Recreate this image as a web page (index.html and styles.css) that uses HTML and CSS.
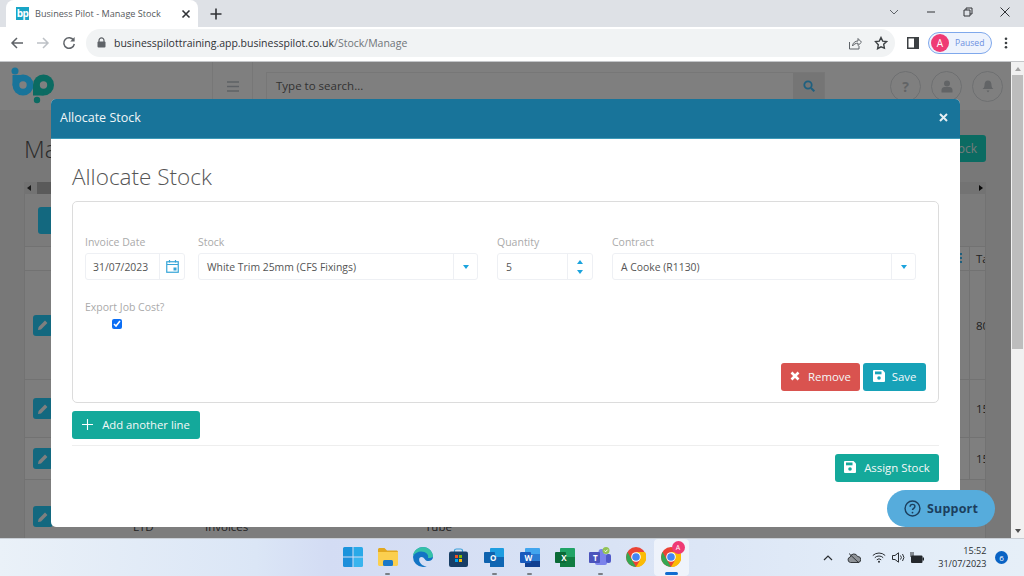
FILE: index.html
```html
<!DOCTYPE html>
<html lang="en">
<head>
<meta charset="utf-8">
<title>Business Pilot - Manage Stock</title>
<link rel="stylesheet" href="styles.css">
</head>
<body>
<div class="screen">
  <div class="tabstrip">
    <div class="tab">
      <span class="favicon">bp</span>
      <span class="tab-title">Business Pilot - Manage Stock</span>
      <svg class="tab-close" width="10" height="10" viewBox="0 0 10 10"><path d="M1.5 1.5l7 7M8.5 1.5l-7 7" stroke="#303236" stroke-width="1.6"/></svg>
    </div>
    <svg class="new-tab" width="12" height="12" viewBox="0 0 12 12"><path d="M6 .5v11M.5 6h11" stroke="#303236" stroke-width="1.6"/></svg>
    <div class="win-controls">
      <svg width="12" height="12" viewBox="0 0 12 12"><path d="M2 4l4 4 4-4" fill="none" stroke="#5f6368"/></svg>
      <svg class="wc-gap" width="12" height="12" viewBox="0 0 12 12"><path d="M2 6h8" stroke="#303236"/></svg>
      <svg class="wc-gap" width="12" height="12" viewBox="0 0 12 12"><path d="M2 4h6v6H2zM4 4V2h6v6H8" fill="none" stroke="#303236"/></svg>
      <svg class="wc-gap" width="12" height="12" viewBox="0 0 12 12"><path d="M1.5 1.5l9 9M10.5 1.5l-9 9" stroke="#303236"/></svg>
    </div>
  </div>
  <div class="toolbar">
    <svg class="nav" width="14" height="14" viewBox="0 0 14 14"><path d="M13 7H2M7 2L2 7l5 5" fill="none" stroke="#5f6368" stroke-width="1.5"/></svg>
    <svg class="nav" width="14" height="14" viewBox="0 0 14 14"><path d="M1 7h11M7 2l5 5-5 5" fill="none" stroke="#bdc1c6" stroke-width="1.5"/></svg>
    <svg class="nav" width="14" height="14" viewBox="0 0 14 14"><path d="M11.6 4.2A5.3 5.3 0 1 0 12.3 8" fill="none" stroke="#5f6368" stroke-width="1.5"/><path d="M12.6 1v4.4H8.2z" fill="#5f6368"/></svg>
    <div class="omnibox">
      <svg class="lock" width="9" height="11" viewBox="0 0 9 11"><path d="M2 5V3.400a2.500 2.500 0 0 1 5 0V5" fill="none" stroke="#5f6368" stroke-width="1.200"/><rect x=".5" y="4.500" width="8" height="6" rx="1" fill="#5f6368"/></svg>
      <span class="url">businesspilottraining.app.businesspilot.co.uk<span class="url-path">/Stock/Manage</span></span>
      <svg width="14" height="14" viewBox="0 0 14 14"><path d="M1.500 6v7h9.500V10" fill="none" stroke="#5f6368"/><path d="M4.500 10c.3-3.500 3-5 5.500-5V2.500l3.500 3.700L10 9.500V7.200c-2.200 0-4 .8-5.500 2.800z" fill="none" stroke="#5f6368"/></svg>
      <svg class="omni-star" width="14" height="14" viewBox="0 0 14 14"><path d="M7 1.500l1.700 3.600 3.800.5-2.800 2.700.7 3.900L7 10.800 3.600 12.700l.7-3.900L1.500 5.600l3.800-.5z" fill="none" stroke="#3c4043" stroke-width="1.400"/></svg>
    </div>
    <svg class="side" width="12" height="12" viewBox="0 0 12 12"><rect x=".75" y=".75" width="10.500" height="10.500" fill="none" stroke="#3c4043" stroke-width="1.500"/><rect x="7" y="1" width="4" height="10" fill="#3c4043"/></svg>
    <div class="profile"><span class="avatar">A</span><span class="paused">Paused</span></div>
    <svg class="kebab" width="4" height="12" viewBox="0 0 4 12"><circle cx="2" cy="1.800" r="1.300" fill="#3c4043"/><circle cx="2" cy="6" r="1.300" fill="#3c4043"/><circle cx="2" cy="10.200" r="1.300" fill="#3c4043"/></svg>
  </div>

  <div class="viewport">
    <div class="page">
      <header class="app-head">
        <svg class="logo" width="46" height="40" viewBox="0 0 46 40">
          <circle cx="5" cy="5" r="3.500" fill="#18749a"/>
          <circle cx="13" cy="19" r="10.500" fill="#18749a"/>
          <rect x="2.500" y="9" width="10.500" height="10.500" fill="#18749a"/>
          <circle cx="13" cy="19" r="3.700" fill="#808080"/>
          <circle cx="33.500" cy="19" r="10.500" fill="#0b6b62"/>
          <rect x="23" y="19" width="10.500" height="10.500" fill="#0b6b62"/>
          <circle cx="33.500" cy="19" r="3.700" fill="#808080"/>
          <circle cx="27" cy="34" r="3.200" fill="#0b6b62"/>
        </svg>
        <div class="burger-cell"><svg width="12" height="11" viewBox="0 0 12 11"><path d="M0 1h12M0 5.500h12M0 10h12" stroke="#bcc3ca" stroke-width="1.500"/></svg></div>
        <div class="search"><span class="search-text">Type to search...</span><span class="search-btn"><svg width="12" height="12" viewBox="0 0 12 12"><circle cx="5" cy="5" r="3.700" fill="none" stroke="#3ec0ff" stroke-width="1.800"/><path d="M8 8l3.300 3.300" stroke="#3ec0ff" stroke-width="2"/></svg></span></div>
        <div class="head-icons">
          <span class="round"><span class="qm">?</span></span>
          <span class="round"><svg width="12" height="13" viewBox="0 0 12 13"><circle cx="6" cy="3.500" r="3" fill="#c4c8cc"/><path d="M.5 12.500V10c0-1.700 1.500-3 3-3h5c1.500 0 3 1.300 3 3v2.500z" fill="#c4c8cc"/></svg></span>
          <span class="round"><svg width="12" height="13" viewBox="0 0 12 13"><path d="M6 .5c2.500 0 3.500 2 3.500 4.500 0 2 .8 3 2 4H.5c1.200-1 2-2 2-4C2.500 2.500 3.500.5 6 .5zM4.500 10.500h3L6 12.500z" fill="#c4c8cc"/></svg></span>
        </div>
      </header>
      <main class="main">
        <div class="title-row"><h1 class="page-title">Manage Stock</h1><button class="add-stock">Add Stock</button></div>
        <div class="hscroll"><span class="arrow-l"></span><span class="thumb"></span><span class="arrow-r"></span></div>
        <div class="table">
          <div class="tools"><span class="tool-btn"></span></div>
          <div class="row row-head"><span class="col-menu"></span><span class="col-end">Ta</span></div>
          <div class="row row-a"><span class="edit"><svg width="12" height="12" viewBox="0 0 12 12"><path d="M1 11l.6-3L8 1.600 10.400 4 4 10.400z" fill="#fff"/></svg></span><span class="col-end col-push">80</span></div>
          <div class="row row-b"><span class="edit"><svg width="12" height="12" viewBox="0 0 12 12"><path d="M1 11l.6-3L8 1.600 10.400 4 4 10.400z" fill="#fff"/></svg></span><span class="col-end col-push">15</span></div>
          <div class="row row-c"><span class="edit"><svg width="12" height="12" viewBox="0 0 12 12"><path d="M1 11l.6-3L8 1.600 10.400 4 4 10.400z" fill="#fff"/></svg></span><span class="col-end col-push">15</span></div>
          <div class="row row-d">
            <span class="edit"><svg width="12" height="12" viewBox="0 0 12 12"><path d="M1 11l.6-3L8 1.600 10.400 4 4 10.400z" fill="#fff"/></svg></span>
            <span class="mini mini-blue"></span><span class="mini mini-red"></span>
            <span class="cell-a">LTD</span><span class="cell-b">Invoices</span><span class="cell-c">Tube</span>
          </div>
        </div>
      </main>
      <div class="overlay">
        <div class="modal">
          <div class="modal-head"><span class="modal-title">Allocate Stock</span><svg width="9" height="9" viewBox="0 0 9 9"><path d="M1 1l7 7M8 1L1 8" stroke="#e6eef2" stroke-width="2"/></svg></div>
          <div class="modal-body">
            <h2 class="heading">Allocate Stock</h2>
            <div class="line-box">
              <div class="fields">
                <div class="field f-date">
                  <label class="label">Invoice Date</label>
                  <div class="control"><span class="value">31/07/2023</span><span class="addon addon-date"><svg width="13" height="13" viewBox="0 0 13 13"><rect x=".75" y="1.750" width="11.500" height="10.500" fill="none" stroke="#36a5d8" stroke-width="1.200"/><path d="M1 4.500h11M3.500 0v2.500M9.500 0v2.500" stroke="#36a5d8" stroke-width="1.200"/><rect x="7.500" y="7.500" width="3" height="3" fill="#36a5d8"/></svg></span></div>
                </div>
                <div class="field f-stock">
                  <label class="label">Stock</label>
                  <div class="control"><span class="value">White Trim 25mm (CFS Fixings)</span><span class="addon addon-select"><i class="caret"></i></span></div>
                </div>
                <div class="field f-qty">
                  <label class="label">Quantity</label>
                  <div class="control"><span class="value">5</span><span class="addon addon-spin"><i class="caret-up"></i><i class="caret"></i></span></div>
                </div>
                <div class="field f-contract">
                  <label class="label">Contract</label>
                  <div class="control"><span class="value">A Cooke (R1130)</span><span class="addon addon-select"><i class="caret"></i></span></div>
                </div>
              </div>
              <div class="export">
                <label class="label">Export Job Cost?</label>
                <input class="check" type="checkbox" checked>
              </div>
              <div class="line-actions">
                <button class="btn btn-red"><svg width="10" height="10" viewBox="0 0 10 10"><path d="M1.500 1.500l7 7M8.500 1.500l-7 7" stroke="#fff" stroke-width="2.600"/></svg>Remove</button>
                <button class="btn btn-cyan"><svg class="disk" width="12" height="12" viewBox="0 0 12 12"><path d="M1 0h8.500L12 2.500V11a1 1 0 0 1-1 1H1a1 1 0 0 1-1-1V1a1 1 0 0 1 1-1z" fill="#fff"/><rect x="2" y="1.500" width="6.500" height="2.800" fill="#17a2b8"/><circle cx="6" cy="8" r="1.800" fill="#17a2b8"/></svg>Save</button>
              </div>
            </div>
            <button class="btn btn-teal btn-add"><svg width="11" height="11" viewBox="0 0 11 11"><path d="M5.500 0v11M0 5.500h11" stroke="#fff" stroke-width="1.100"/></svg>Add another line</button>
            <div class="modal-rule"></div>
            <div class="modal-actions"><button class="btn btn-teal btn-assign"><svg class="disk" width="12" height="12" viewBox="0 0 12 12"><path d="M1 0h8.500L12 2.500V11a1 1 0 0 1-1 1H1a1 1 0 0 1-1-1V1a1 1 0 0 1 1-1z" fill="#fff"/><rect x="2" y="1.500" width="6.500" height="2.800" fill="#14a99b"/><circle cx="6" cy="8" r="1.800" fill="#14a99b"/></svg>Assign Stock</button></div>
          </div>
        </div>
      </div>
      <div class="support"><svg width="17" height="17" viewBox="0 0 19 19"><circle cx="9.500" cy="9.500" r="8.300" fill="none" stroke="#1c3f5e" stroke-width="1.600"/><path d="M6.800 7.500c0-1.700 1.200-2.600 2.700-2.600s2.700.9 2.700 2.400c0 2-2.700 2-2.700 4" fill="none" stroke="#1c3f5e" stroke-width="1.600"/><circle cx="9.500" cy="14" r="1" fill="#1c3f5e"/></svg><span>Support</span></div>
    </div>
    <div class="vscroll"><span class="v-up"></span><span class="v-thumb"></span><span class="v-down"></span></div>
  </div>

  <footer class="taskbar">
    <div class="task-icons">
      <span class="ti"><svg width="20" height="20" viewBox="0 0 20 20"><path d="M0 1.500A1.500 1.500 0 0 1 1.500 0h8v9.500H0z" fill="#1b93dc"/><path d="M10.500 0h8A1.500 1.500 0 0 1 20 1.500v8h-9.500z" fill="#29a9e8"/><path d="M0 10.500h9.500V20h-8A1.500 1.500 0 0 1 0 18.500z" fill="#1d8fdb"/><path d="M10.500 10.500H20v8a1.500 1.500 0 0 1-1.500 1.500h-8z" fill="#39b4ee"/></svg></span>
      <span class="ti"><svg width="20" height="18" viewBox="0 0 20 18"><path d="M0 1.500C0 .7.700 0 1.500 0h5L9 2.500h9.500c.8 0 1.500.7 1.500 1.500v1H0z" fill="#e2a820"/><path d="M0 4h20v12.500c0 .8-.7 1.500-1.500 1.500h-17C.7 18 0 17.300 0 16.500z" fill="#fbcf4f"/><rect x="5" y="12" width="10" height="6" rx="1.500" fill="#1a78c9"/></svg><i class="dot"></i></span>
      <span class="ti"><svg width="20" height="20" viewBox="0 0 20 20"><path d="M10 0a10 10 0 0 1 10 10c0 3-3 4.500-5.500 4-3-.5-3-4-6-4C6 10 5.500 13 7 15.500c1.200 2 3.500 3.800 6.800 3.800A10 10 0 0 1 10 20 10 10 0 0 1 10 0z" fill="#1274c4"/><path d="M10 0c-5 0-9.500 3.500-10 9 2-3 5-4.500 8-4.500 5 0 8 3 7 6.500 3 0 5-.5 5-2C19.500 4 15.500 0 10 0z" fill="#35c1a8"/></svg></span>
      <span class="ti"><svg width="19" height="19" viewBox="0 0 19 19"><path d="M5.500 4V2.500C5.500 1.500 6.500 1 7.500 1h4c1 0 2 .5 2 1.500V4" fill="none" stroke="#3aa0d8" stroke-width="1.200"/><rect y="3.500" width="19" height="15.500" rx="2" fill="#183e66"/><rect x="6" y="7" width="3" height="3" fill="#f25022"/><rect x="10" y="7" width="3" height="3" fill="#7fba00"/><rect x="6" y="11" width="3" height="3" fill="#00a4ef"/><rect x="10" y="11" width="3" height="3" fill="#ffb900"/></svg></span>
      <span class="ti"><svg width="20" height="19" viewBox="0 0 20 19"><rect x="6" y="0" width="14" height="17" rx="1" fill="#1e9de0"/><rect x="6" y="9" width="14" height="10" fill="#0f66b3"/><rect y="4" width="11" height="11" rx="1" fill="#0f62ae"/></svg><span class="ti-letter">O</span><i class="dot"></i></span>
      <span class="ti"><svg width="20" height="19" viewBox="0 0 20 19"><rect x="5" y="0" width="15" height="19" rx="1" fill="#41a5ee"/><rect x="5" y="6" width="15" height="7" fill="#2b7cd3"/><rect x="5" y="13" width="15" height="6" fill="#103f91"/><rect y="4" width="11" height="11" rx="1" fill="#185abd"/></svg><span class="ti-letter">W</span><i class="dot"></i></span>
      <span class="ti"><svg width="20" height="19" viewBox="0 0 20 19"><rect x="5" y="0" width="15" height="19" rx="1" fill="#21a366"/><rect x="5" y="9" width="15" height="10" fill="#107c41"/><rect y="4" width="11" height="11" rx="1" fill="#0b6a37"/></svg><span class="ti-letter">X</span></span>
      <span class="ti"><svg width="22" height="20" viewBox="0 0 22 20"><circle cx="12.500" cy="5" r="3" fill="#7b83eb"/><rect x="6" y="7" width="12" height="11" rx="2" fill="#7b83eb"/><rect x="17" y="7" width="5" height="9" rx="2" fill="#5059c9"/><rect y="5" width="11" height="11" rx="1" fill="#4b53bc"/><circle cx="17" cy="3.500" r="3.500" fill="#92c353"/><path d="M15.300 3.500l1.300 1.300 2-2.200" fill="none" stroke="#fff"/></svg><span class="ti-letter ti-t">T</span><i class="dot"></i></span>
      <span class="ti"><svg width="20" height="20" viewBox="0 0 20 20"><circle cx="10" cy="10" r="10" fill="#ea4335"/><path d="M1.500 5L6 13l4 7a10 10 0 0 1-8.500-15z" fill="#34a853"/><path d="M10 5h9a10 10 0 0 1-9 15l4.300-7.500z" fill="#fbbc05"/><circle cx="10" cy="10" r="4.800" fill="#fff"/><circle cx="10" cy="10" r="3.800" fill="#4285f4"/></svg></span>
      <span class="ti ti-active"><svg width="20" height="20" viewBox="0 0 20 20"><circle cx="10" cy="10" r="10" fill="#ea4335"/><path d="M1.500 5L6 13l4 7a10 10 0 0 1-8.500-15z" fill="#34a853"/><path d="M10 5h9a10 10 0 0 1-9 15l4.300-7.500z" fill="#fbbc05"/><circle cx="10" cy="10" r="4.800" fill="#fff"/><circle cx="10" cy="10" r="3.800" fill="#4285f4"/></svg><span class="ti-badge">A</span><i class="bar"></i></span>
    </div>
    <div class="tray">
      <svg width="10" height="6" viewBox="0 0 10 6"><path d="M1 5l4-4 4 4" fill="none" stroke="#2b2f33" stroke-width="1.200"/></svg>
      <svg class="tray-cloud" width="14" height="12" viewBox="0 0 14 12"><path d="M3.500 10.500a2.800 2.800 0 0 1-.3-5.500 3.800 3.800 0 0 1 7.300-.5 3 3 0 0 1 .5 6z" fill="#8f9398" stroke="#33373b"/><path d="M2 1.500l10 9.500" stroke="#33373b"/></svg>
      <svg width="14" height="11" viewBox="0 0 14 11"><path d="M.8 3.500a9 9 0 0 1 12.400 0M2.800 5.700a6 6 0 0 1 8.400 0M4.800 7.800a3.200 3.200 0 0 1 4.400 0" fill="none" stroke="#2b2f33"/><circle cx="7" cy="9.800" r="1" fill="#2b2f33"/></svg>
      <svg width="13" height="11" viewBox="0 0 13 11"><path d="M.5 3.500h2.500L6.500.8v9.400L3 7.500H.5z" fill="none" stroke="#2b2f33"/><path d="M8.500 3.500a3 3 0 0 1 0 4M10.500 2a5.500 5.500 0 0 1 0 7" fill="none" stroke="#2b2f33"/></svg>
      <svg width="14" height="12" viewBox="0 0 14 12"><rect x="1" y="3.500" width="11.500" height="7.500" rx="1" fill="#24282c"/><rect x="12.500" y="5.500" width="1.500" height="3" fill="#24282c"/><path d="M1 0v5M3 0v5" stroke="#24282c"/></svg>
      <div class="clock"><span>15:52</span><span>31/07/2023</span></div>
      <span class="notif">6</span>
    </div>
  </footer>
</div>
</body>
</html>
```

FILE: styles.css
```css
* { box-sizing: border-box; }
html, body { margin: 0; padding: 0; }
body { font-family: "Open Sans", "Noto Sans", sans-serif; }
.screen { width: 1024px; height: 576px; overflow: hidden; display: flex; flex-direction: column; background: #fff; }

/* Browser tabs */
.tabstrip { height: 27px; background: #dee1e6; display: flex; align-items: flex-start; flex: none; }
.tab { width: 192px; height: 27px; margin-left: 6px; background: #fff; border-radius: 8px 8px 0 0; display: flex; align-items: center; padding: 0 7px 0 10px; }
.favicon { width: 13px; height: 13px; background: #19a5c6; color: #fff; font: 700 10px/12px "Open Sans", sans-serif; text-align: center; letter-spacing: -.6px; flex: none; }
.tab-title { font-size: 9.150px; color: #55585c; margin-left: 6px; white-space: nowrap; flex: 1; }
.tab-close { flex: none; }
.new-tab { margin: 8px 0 0 12px; }
.win-controls { margin-left: auto; display: flex; padding: 6px 13px 0 0; }
.wc-gap { margin-left: 25px; }

/* Browser toolbar */
.toolbar { height: 35px; flex: none; background: #fff; border-bottom: 1px solid #c4c6c9; display: flex; align-items: center; padding: 0 0 3px 10px; }
.nav { margin-right: 12px; flex: none; }
.omnibox { width: 809px; height: 28px; margin-left: -2px; background: #f1f3f4; border-radius: 14px; display: flex; align-items: center; padding: 0 7px 0 11px; flex: none; }
.lock { flex: none; }
.url { font-size: 10.500px; color: #303236; margin-left: 8px; white-space: nowrap; flex: 1; }
.url-path { color: #70757a; }
.omni-star { margin-left: 12px; }
.side { margin-left: 12px; flex: none; }
.profile { width: 64px; height: 22px; margin-left: 9px; border: 1px solid #7fa8ec; border-radius: 11px; background: #eef3fd; display: flex; align-items: center; padding-left: 2px; flex: none; }
.avatar { width: 18px; height: 18px; border-radius: 50%; background: #ef3a74; color: #fff; font-size: 10px; line-height: 18px; text-align: center; }
.paused { font-size: 8.600px; color: #6c8fe0; margin-left: 6px; }
.kebab { margin-left: 12px; flex: none; }

/* Page */
.viewport { flex: 1; display: flex; min-height: 0; }
.page { width: 1011px; position: relative; overflow: hidden; background: #f0f0f0; flex: none; }
.app-head { height: 48px; background: #fff; display: flex; align-items: stretch; }
.logo { position: relative; z-index: 2; margin: 4px 0 0 10px; flex: none; }
.burger-cell { width: 41px; margin: 0 0 0 156px; border-left: 1px solid #efefef; border-right: 1px solid #efefef; display: flex; align-items: center; justify-content: center; flex: none; }
.search { width: 559px; height: 28px; margin: 10px 0 0 13px; border: 1px solid #eee; display: flex; align-items: center; flex: none; }
.search-text { flex: 1; padding: 0 0 2px 9px; font-size: 11.500px; color: #666; }
.search-btn { width: 31px; height: 26px; background: #eaeaea; display: flex; align-items: center; justify-content: center; }
.head-icons { display: flex; gap: 10px; margin: 9px 0 0 65px; height: 31px; }
.round { width: 31px; height: 31px; border: 1px solid #dcdfe2; border-radius: 50%; display: flex; align-items: center; justify-content: center; }
.qm { font-size: 14px; font-weight: 700; color: #c4c8cc; }

.main { padding: 25px 25px 0 24px; }
.title-row { height: 27px; display: flex; justify-content: space-between; align-items: center; }
.page-title { margin: 0; font-size: 24px; font-weight: 300; color: #555; }
.add-stock { height: 27px; width: 100px; border: 0; border-radius: 3px; background: #16d6c4; color: #e8f5f3; font: 12px "Open Sans", sans-serif; text-align: right; padding: 0 9px 0 0; }
.hscroll { height: 12px; margin-top: 20px; background: #e6e6e6; display: flex; align-items: center; padding: 0 3px; }
.arrow-l { border: 3px solid transparent; border-right: 4px solid #333; border-left: 0; }
.thumb { width: 14px; height: 12px; margin-left: 6px; background: #b5b5b5; }
.arrow-r { margin-left: auto; border: 3px solid transparent; border-left: 4px solid #111; border-right: 0; }
.table { border-left: 1px solid #e4e4e4; border-right: 1px solid #e4e4e4; background: #f7f7f7; }
.tools { height: 52px; padding: 13px 0 0 13px; }
.tool-btn { display: block; width: 40px; height: 27px; border-radius: 3px; background: #26d0ff; }
.row { display: flex; align-items: center; padding-left: 8px; border-top: 1px solid #e4e4e4; font-size: 11.500px; color: #444; }
.row-head { height: 24px; background: #fff; }
.row-a { height: 109px; background: #fafafa; }
.row-b { height: 58px; background: #fafafa; }
.row-c { height: 42px; background: #fff; }
.row-d { height: 74px; background: #fafafa; }
.col-menu { width: 3px; height: 12px; margin-left: auto; margin-right: 7px; background: repeating-linear-gradient(#3ec0ff 0 2px, transparent 2px 4px); }
.col-end { align-self: stretch; width: 16px; padding-left: 6px; border-left: 1px solid #e4e4e4; display: flex; align-items: center; overflow: hidden; white-space: nowrap; }
.col-push { margin-left: auto; }
.edit { width: 20px; height: 21px; border-radius: 3px; background: #26d0ff; display: flex; align-items: center; justify-content: center; flex: none; }
.mini { width: 22px; height: 21px; border-radius: 3px; flex: none; }
.mini-blue { margin-left: 8px; background: #26d0ff; }
.mini-red { margin-left: 9px; background: #ff6a64; }
.cell-a { margin-left: 19px; width: 72px; padding-top: 20px; }
.cell-b { width: 220px; padding-top: 20px; }
.cell-c { padding-top: 20px; }

/* Modal */
.overlay { position: absolute; inset: 0; background: rgba(0, 0, 0, .5); padding: 37px 51px 0; }
.modal { height: 428px; background: #fff; border-radius: 5px; overflow: hidden; }
.modal-head { height: 40px; background: #18749a; border-bottom: 1px solid #3d9ab8; display: flex; align-items: center; justify-content: space-between; padding: 0 12px 3px 9px; }
.modal-title { font-size: 12.500px; color: #f1f6f8; }
.modal-body { padding: 0 21px; }
.heading { margin: 0; height: 62px; padding-top: 21px; font-size: 22.500px; line-height: 34px; font-weight: 300; color: #555; }
.line-box { height: 202px; border: 1px solid #dcdcdc; border-radius: 5px; padding: 33px 12px 0; display: flex; flex-direction: column; }
.fields { display: flex; }
.field { flex: none; }
.f-date { width: 100px; }
.f-date .value { padding-left: 7px; }
.f-stock { width: 280px; margin-left: 13px; }
.f-qty { width: 96px; margin-left: 19px; }
.f-contract { width: 304px; margin-left: 19px; }
.label { display: block; font-size: 10.500px; line-height: 14px; color: #aaa; margin-bottom: 4px; }
.control { height: 27px; border: 1px solid #eef0f4; border-radius: 3px; display: flex; align-items: center; }
.value { flex: 1; padding-left: 8px; font-size: 10.400px; color: #555; white-space: nowrap; }
.addon { height: 100%; border-left: 1px solid #eef0f4; display: flex; align-items: center; justify-content: center; flex: none; }
.addon-date { width: 25px; }
.addon-select { width: 24px; }
.addon-spin { width: 25px; flex-direction: column; gap: 6px; }
.caret { width: 0; height: 0; border: 3.500px solid transparent; border-top: 4px solid #1ba3dd; border-bottom: 0; }
.caret-up { width: 0; height: 0; border: 3.500px solid transparent; border-bottom: 4px solid #1ba3dd; border-top: 0; }
.export { margin-top: 20px; }
.export .label { margin-bottom: 5px; }
.check { display: block; width: 10px; height: 10px; margin: 0 0 0 27px; accent-color: #0b6ef5; }
.line-actions { margin-top: auto; padding-bottom: 11px; display: flex; justify-content: flex-end; gap: 3px; }
.btn { height: 28px; border: 0; border-radius: 3px; color: #f4f8f8; font: 11.400px "Open Sans", sans-serif; display: inline-flex; align-items: center; justify-content: center; padding: 0 0 2px; }
.btn-red { width: 79px; background: #d9534f; gap: 8px; }
.btn-cyan { width: 63px; background: #17a2b8; gap: 7px; }
.btn-teal { background: #14a99b; }
.btn-add { width: 128px; margin-top: 8px; display: flex; gap: 9px; font-size: 11.300px; }
.modal-rule { height: 1px; margin-top: 6px; background: #eee; }
.modal-actions { display: flex; justify-content: flex-end; padding-top: 8px; }
.btn-assign { width: 104px; gap: 8px; }
.support { position: absolute; left: 887px; top: 428px; width: 108px; height: 37px; border-radius: 19px; background: #56acdc; color: #1c3f5e; font-size: 12.500px; font-weight: 700; letter-spacing: .2px; display: flex; align-items: center; justify-content: center; gap: 6px; }

/* Page scrollbar */
.vscroll { width: 13px; background: #f1f1f1; display: flex; flex-direction: column; align-items: center; flex: none; }
.v-up { margin-top: 5px; border: 3px solid transparent; border-bottom: 4px solid #a3a3a3; border-top: 0; }
.v-thumb { width: 11px; height: 274px; margin-top: 4px; background: #bdbdbd; }
.v-down { margin-top: auto; margin-bottom: 5px; border: 3px solid transparent; border-top: 4px solid #505050; border-bottom: 0; }

/* Windows taskbar */
.taskbar { height: 38px; flex: none; background: linear-gradient(90deg, #eaf1f8 0%, #dbe6f6 25%, #d3dcf4 32%, #d9e3f5 60%, #e2ecf8 85%, #e6eff8 100%); display: flex; align-items: center; border-top: 1px solid #c9cfd6; }
.task-icons { margin-left: 335px; display: flex; align-items: center; }
.ti { position: relative; width: 35.400px; height: 37px; display: flex; align-items: center; justify-content: center; padding-bottom: 1px; }
.ti-active { background: rgba(255, 255, 255, .55); border-radius: 4px; }
.ti-letter { position: absolute; left: 11px; top: 13px; width: 11px; text-align: center; font-size: 8px; font-weight: 700; color: #fff; }
.ti-t { left: 7px; }
.dot { position: absolute; left: 15px; bottom: 1px; width: 5px; height: 2px; border-radius: 1px; background: #7a7f86; }
.bar { position: absolute; left: 11px; bottom: 1px; width: 13px; height: 3px; border-radius: 2px; background: #0f6cd0; }
.ti-badge { position: absolute; left: 18px; top: 2px; width: 13px; height: 13px; border-radius: 50%; background: #ef3a74; color: #fff; font-size: 7px; line-height: 13px; text-align: center; }
.tray { margin-left: auto; display: flex; align-items: center; gap: 5.500px; padding-right: 16px; }
.tray-cloud { margin: 0 5.500px 0 8.500px; }
.clock { display: flex; flex-direction: column; align-items: flex-end; font-size: 9.100px; line-height: 13px; padding-bottom: 2px; color: #2b2f33; margin-left: 8.500px; }
.notif { width: 13px; height: 13px; margin-left: 3px; border-radius: 50%; background: #0a63c4; color: #fff; font-size: 8px; line-height: 13px; text-align: center; }
```
